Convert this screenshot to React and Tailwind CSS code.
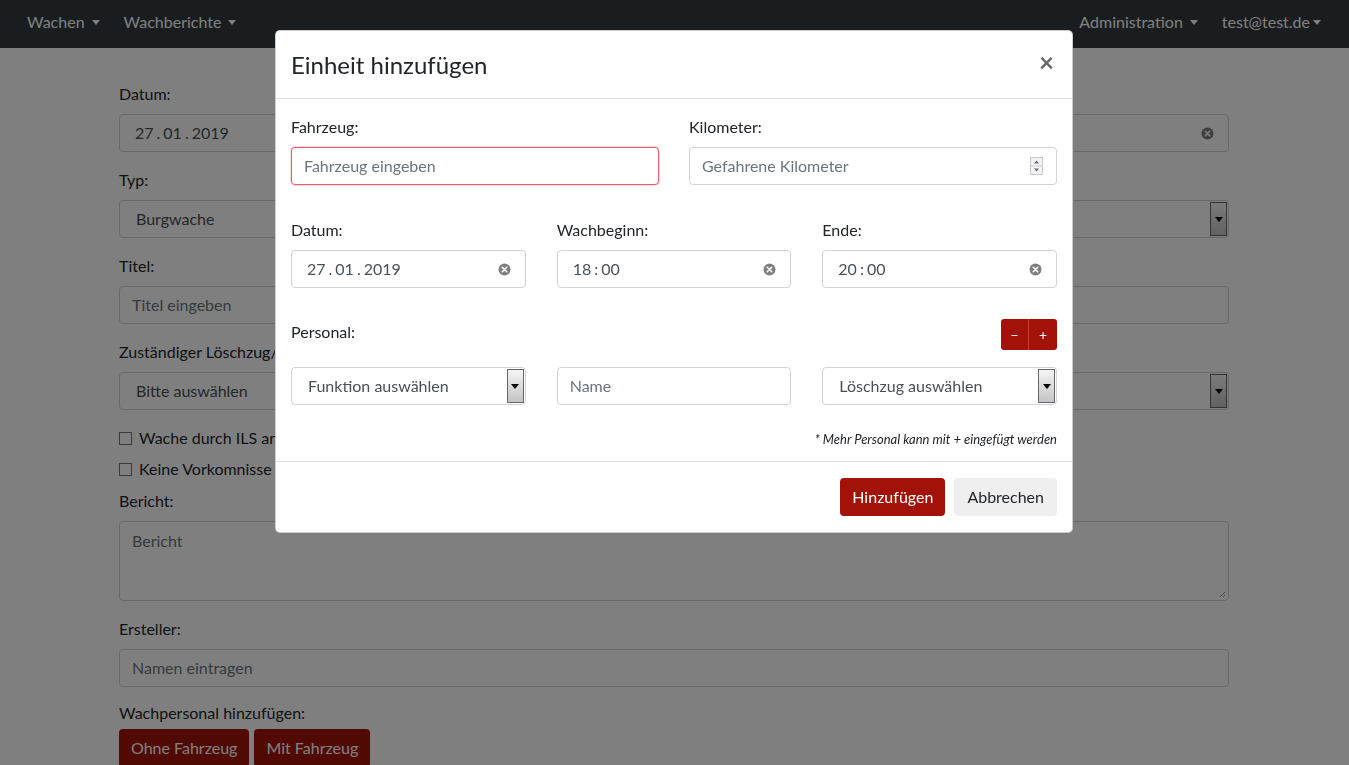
import React from "react";

// kleine Helfer
const Caret = ({ className = "" }) => (
  <span className={"inline-block w-0 h-0 border-t-[5px] border-x-[4px] border-x-transparent align-middle " + className} />
);

const ClearIcon = () => (
  <svg width="13" height="13" viewBox="0 0 13 13">
    <circle cx="6.5" cy="6.5" r="6" fill="#7f7f7f" />
    <path d="M4.3 4.3 L8.7 8.7 M8.7 4.3 L4.3 8.7" stroke="#fff" strokeWidth="1.6" strokeLinecap="round" />
  </svg>
);

const SpinIcon = () => (
  <svg width="13" height="18" viewBox="0 0 13 18">
    <rect x="0.5" y="0.5" width="12" height="17" fill="#f3f3f6" stroke="#c8c8d0" />
    <line x1="1" y1="9" x2="12" y2="9" stroke="#c8c8d0" />
    <path d="M4 6.5 L6.5 3.5 L9 6.5 Z" fill="#6a6a7a" />
    <path d="M4 11.5 L6.5 14.5 L9 11.5 Z" fill="#6a6a7a" />
  </svg>
);

const TextInput = ({ placeholder, invalid = false }) => (
  <div
    className={
      "h-[38px] rounded-[4px] bg-white flex items-center px-[12px] text-[16px] text-[#6c757d] " +
      (invalid
        ? "border-[1.5px] border-[#e4606d] shadow-[0_0_0_1px_rgba(220,53,69,0.2)]"
        : "border border-[#ced4da]")
    }
  >
    {placeholder}
  </div>
);

const DateValue = ({ parts, sep }) => (
  <span className="flex items-center text-[#495057]">
    {parts.map((p, i) => (
      <React.Fragment key={i}>
        {i > 0 && <span className="mx-[3px]">{sep}</span>}
        <span>{p}</span>
      </React.Fragment>
    ))}
  </span>
);

const ClearInput = ({ parts, sep }) => (
  <div className="h-[38px] rounded-[4px] border border-[#ced4da] bg-white flex items-center justify-between pl-[15px] pr-[14px] text-[16px]">
    <DateValue parts={parts} sep={sep} />
    <ClearIcon />
  </div>
);

const SelectBox = ({ text }) => (
  <div className="h-[38px] rounded-[4px] border border-[#ced4da] bg-white flex items-stretch justify-between pl-[16px] text-[16px] text-[#495057]">
    <span className="flex items-center">{text}</span>
    <span className="w-[17px] my-[1px] mr-[1px] border border-[#666] bg-gradient-to-b from-[#f5f5f5] to-[#c4c4c4] flex items-center justify-center">
      <Caret className="border-t-black" />
    </span>
  </div>
);

const Label = ({ children }) => <div className="text-[16px] leading-[24px] text-[#212529] mb-[8px]">{children}</div>;

const Checkbox = ({ label }) => (
  <div className="flex items-center h-[24px]">
    <span className="w-[13px] h-[13px] border border-[#767676] bg-white mr-[7px]" />
    <span className="text-[16px] text-[#212529]">{label}</span>
  </div>
);

const RedButton = ({ children }) => (
  <button className="h-[38px] px-[12px] rounded-[4px] bg-[#a31208] text-white text-[16px]">{children}</button>
);

const NavLink = ({ children }) => (
  <div className="flex items-center px-[12px] pb-[4px] text-white text-[16px]">
    {children}
    <Caret className="border-t-white ml-[7px]" />
  </div>
);

export default function App() {
  return (
    <div className="relative min-h-screen bg-white font-[Lato,'Liberation_Sans',sans-serif] overflow-hidden">
      {/* Navbar */}
      <nav className="h-[48px] bg-[#343a40] flex items-center justify-between px-[15px]">
        <div className="flex h-full">
          <NavLink>Wachen</NavLink>
          <NavLink>Wachberichte</NavLink>
        </div>
        <div className="flex h-full">
          <NavLink>Administration</NavLink>
          <div className="flex items-center pl-[12px] pr-[13px] pb-[4px] text-white text-[16px]">
            test@test.de
            <Caret className="border-t-white ml-[3px]" />
          </div>
        </div>
      </nav>

      {/* Formular im Hintergrund */}
      <main className="w-[1110px] ml-[119px] pt-[34px]">
        <div className="mb-[16px]">
          <Label>Datum:</Label>
          <div className="h-[38px] rounded-[4px] border border-[#ced4da] bg-white flex items-center justify-between pl-[15px] pr-[14px] text-[16px]">
            <DateValue parts={["27", "01", "2019"]} sep="." />
            <ClearIcon />
          </div>
        </div>
        <div className="mb-[16px]">
          <Label>Typ:</Label>
          <SelectBox text="Burgwache" />
        </div>
        <div className="mb-[16px]">
          <Label>Titel:</Label>
          <TextInput placeholder="Titel eingeben" />
        </div>
        <div className="mb-[16px]">
          <Label>Zuständiger Löschzug/Einheit:</Label>
          <SelectBox text="Bitte auswählen" />
        </div>
        <div className="mb-[8px]">
          <Checkbox label="Wache durch ILS angefordert" />
          <div className="h-[7px]" />
          <Checkbox label="Keine Vorkomnisse" />
        </div>
        <div className="mb-[16px]">
          <Label>Bericht:</Label>
          <div className="relative h-[80px] rounded-[4px] border border-[#ced4da] bg-white px-[12px] pt-[7px] text-[16px] text-[#6c757d]">
            Bericht
            <svg className="absolute right-[2px] bottom-[2px]" width="8" height="8" viewBox="0 0 8 8">
              <path d="M7 2 L2 7 M7 5 L5 7" stroke="#999" strokeWidth="1" />
            </svg>
          </div>
        </div>
        <div className="mb-[14px]">
          <Label>Ersteller:</Label>
          <TextInput placeholder="Namen eintragen" />
        </div>
        <div className="text-[16px] leading-[24px] text-[#212529] mb-[4px]">Wachpersonal hinzufügen:</div>
        <div className="flex gap-[5px]">
          <RedButton>Ohne Fahrzeug</RedButton>
          <RedButton>Mit Fahrzeug</RedButton>
        </div>
      </main>

      {/* Modal-Hintergrund */}
      <div className="fixed inset-0 bg-black/50" />

      {/* Modal */}
      <div className="fixed inset-0 pl-[275px] pt-[30px]">
        <div className="w-[798px] bg-white rounded-[5px] border border-black/20">
          <div className="h-[68px] flex items-center justify-between pl-[15px] pr-[18px] border-b border-[#dee2e6]">
            <h4 className="text-[24px] text-[#212529]">Einheit hinzufügen</h4>
            <span className="text-[26px] font-bold text-black/60 leading-none -mt-[6px]">×</span>
          </div>

          <div className="px-[15px] pt-[16px] pb-[12px]">
            <div className="grid grid-cols-2 gap-x-[30px]">
              <div>
                <Label>Fahrzeug:</Label>
                <TextInput placeholder="Fahrzeug eingeben" invalid />
              </div>
              <div>
                <Label>Kilometer:</Label>
                <div className="h-[38px] rounded-[4px] border border-[#ced4da] bg-white flex items-center justify-between pl-[12px] pr-[13px] text-[16px] text-[#6c757d]">
                  Gefahrene Kilometer
                  <SpinIcon />
                </div>
              </div>
            </div>

            <div className="grid grid-cols-3 gap-x-[31px] mt-[33px]">
              <div>
                <Label>Datum:</Label>
                <ClearInput parts={["27", "01", "2019"]} sep="." />
              </div>
              <div>
                <Label>Wachbeginn:</Label>
                <ClearInput parts={["18", "00"]} sep=":" />
              </div>
              <div>
                <Label>Ende:</Label>
                <ClearInput parts={["20", "00"]} sep=":" />
              </div>
            </div>

            <div className="flex justify-between items-start mt-[32px]">
              <div className="text-[16px] leading-[24px] text-[#212529]">Personal:</div>
              <div className="flex -mt-[1px]">
                <button className="w-[28px] h-[31px] rounded-l-[3px] bg-[#a31208] text-white text-[14px] border-r border-[#c9423a]">−</button>
                <button className="w-[28px] h-[31px] rounded-r-[3px] bg-[#a31208] text-white text-[14px]">+</button>
              </div>
            </div>

            <div className="grid grid-cols-3 gap-x-[31px] mt-[17px]">
              <SelectBox text="Funktion auswählen" />
              <TextInput placeholder="Name" />
              <SelectBox text="Löschzug auswählen" />
            </div>

            <div className="text-right text-[13px] italic text-[#212529] mt-[24px] leading-[20px]">
              * Mehr Personal kann mit + eingefügt werden
            </div>
          </div>

          <div className="border-t border-[#dee2e6] px-[15px] pt-[16px] pb-[16px] flex justify-end gap-[9px]">
            <RedButton>Hinzufügen</RedButton>
            <button className="h-[38px] px-[13px] rounded-[4px] bg-[#efefef] text-[#212529] text-[16px]">Abbrechen</button>
          </div>
        </div>
      </div>
    </div>
  );
}
